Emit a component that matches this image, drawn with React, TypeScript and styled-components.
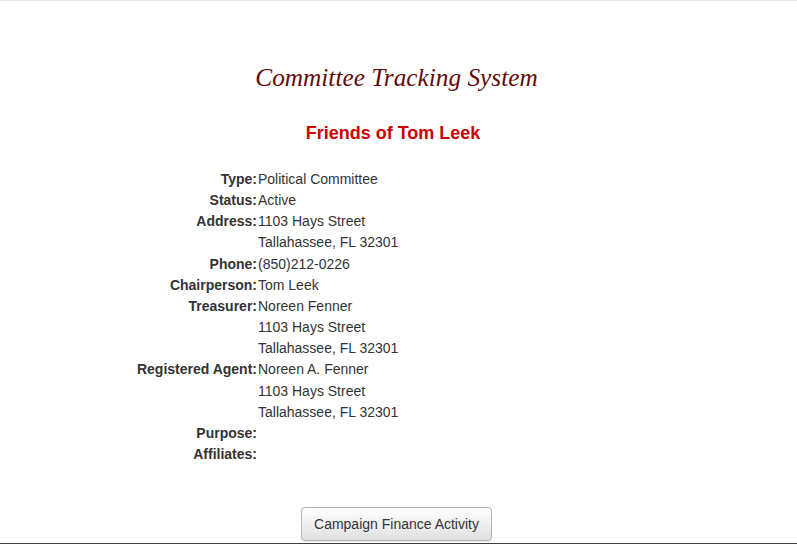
import React from "react";
import styled, { createGlobalStyle } from "styled-components";

const Global = createGlobalStyle`
  html, body { margin: 0; padding: 0; background: #fff; }
  body { font-family: "Liberation Sans", Arial, sans-serif; font-size: 14px; color: #333; }
`;

const Page = styled.div`
  height: 544px;
  box-sizing: border-box;
  border-top: 1px solid #e7e7e7;
  border-bottom: 1px solid #3a3f44;
  display: flex;
  flex-direction: column;
  overflow: hidden;
`;

const Title = styled.h1`
  margin: 61px 4px 0 0;
  text-align: center;
  font-family: "Liberation Serif", "Times New Roman", serif;
  font-style: italic;
  font-weight: normal;
  font-size: 25.3px;
  line-height: 30px;
  color: #640a0a;
`;

const Heading = styled.h2`
  margin: 31px 11px 0 0;
  text-align: center;
  font-family: "Liberation Sans", Arial, sans-serif;
  font-weight: bold;
  font-size: 18px;
  line-height: 20px;
  color: #cc0000;
`;

const Details = styled.dl`
  margin: 26px 0 0 0;
  display: grid;
  grid-template-columns: 257px 1fr;
  row-gap: 0;
`;

const Label = styled.dt`
  text-align: right;
  font-weight: bold;
  line-height: 21.15px;
  color: #333;
`;

const Value = styled.dd`
  margin: 0 0 0 1px;
  line-height: 21.15px;
  color: #333;
`;

const Actions = styled.div`
  margin-top: auto;
  padding: 0 4px 2px 0;
  display: flex;
  justify-content: center;
`;

const Button = styled.button`
  font-family: "Liberation Sans", Arial, sans-serif;
  font-size: 14px;
  color: #333;
  line-height: 20px;
  padding: 6px 12px;
  border: 1px solid #b4b4b4;
  border-radius: 4px;
  background: linear-gradient(to bottom, #ffffff 0%, #e0e0e0 100%);
  box-shadow: inset 0 1px 0 rgba(255, 255, 255, 0.15), 0 1px 1px rgba(0, 0, 0, 0.075);
  cursor: pointer;
`;

type Row = { label: string; lines: string[] };

const rows: Row[] = [
  { label: "Type:", lines: ["Political Committee"] },
  { label: "Status:", lines: ["Active"] },
  { label: "Address:", lines: ["1103 Hays Street", "Tallahassee, FL 32301"] },
  { label: "Phone:", lines: ["(850)212-0226"] },
  { label: "Chairperson:", lines: ["Tom Leek"] },
  { label: "Treasurer:", lines: ["Noreen Fenner", "1103 Hays Street", "Tallahassee, FL 32301"] },
  { label: "Registered Agent:", lines: ["Noreen A. Fenner", "1103 Hays Street", "Tallahassee, FL 32301"] },
  { label: "Purpose:", lines: [""] },
  { label: "Affiliates:", lines: [""] },
];

export default function App() {
  return (
    <>
      <Global />
      <Page>
        <Title>Committee Tracking System</Title>
        <Heading>Friends of Tom Leek</Heading>
        <Details>
          {rows.map((r) => (
            <React.Fragment key={r.label}>
              <Label>{r.label}</Label>
              <Value>
                {r.lines.map((l, i) => (
                  <div key={i}>{l || "\u00a0"}</div>
                ))}
              </Value>
            </React.Fragment>
          ))}
        </Details>
        <Actions>
          <Button>Campaign Finance Activity</Button>
        </Actions>
      </Page>
    </>
  );
}
